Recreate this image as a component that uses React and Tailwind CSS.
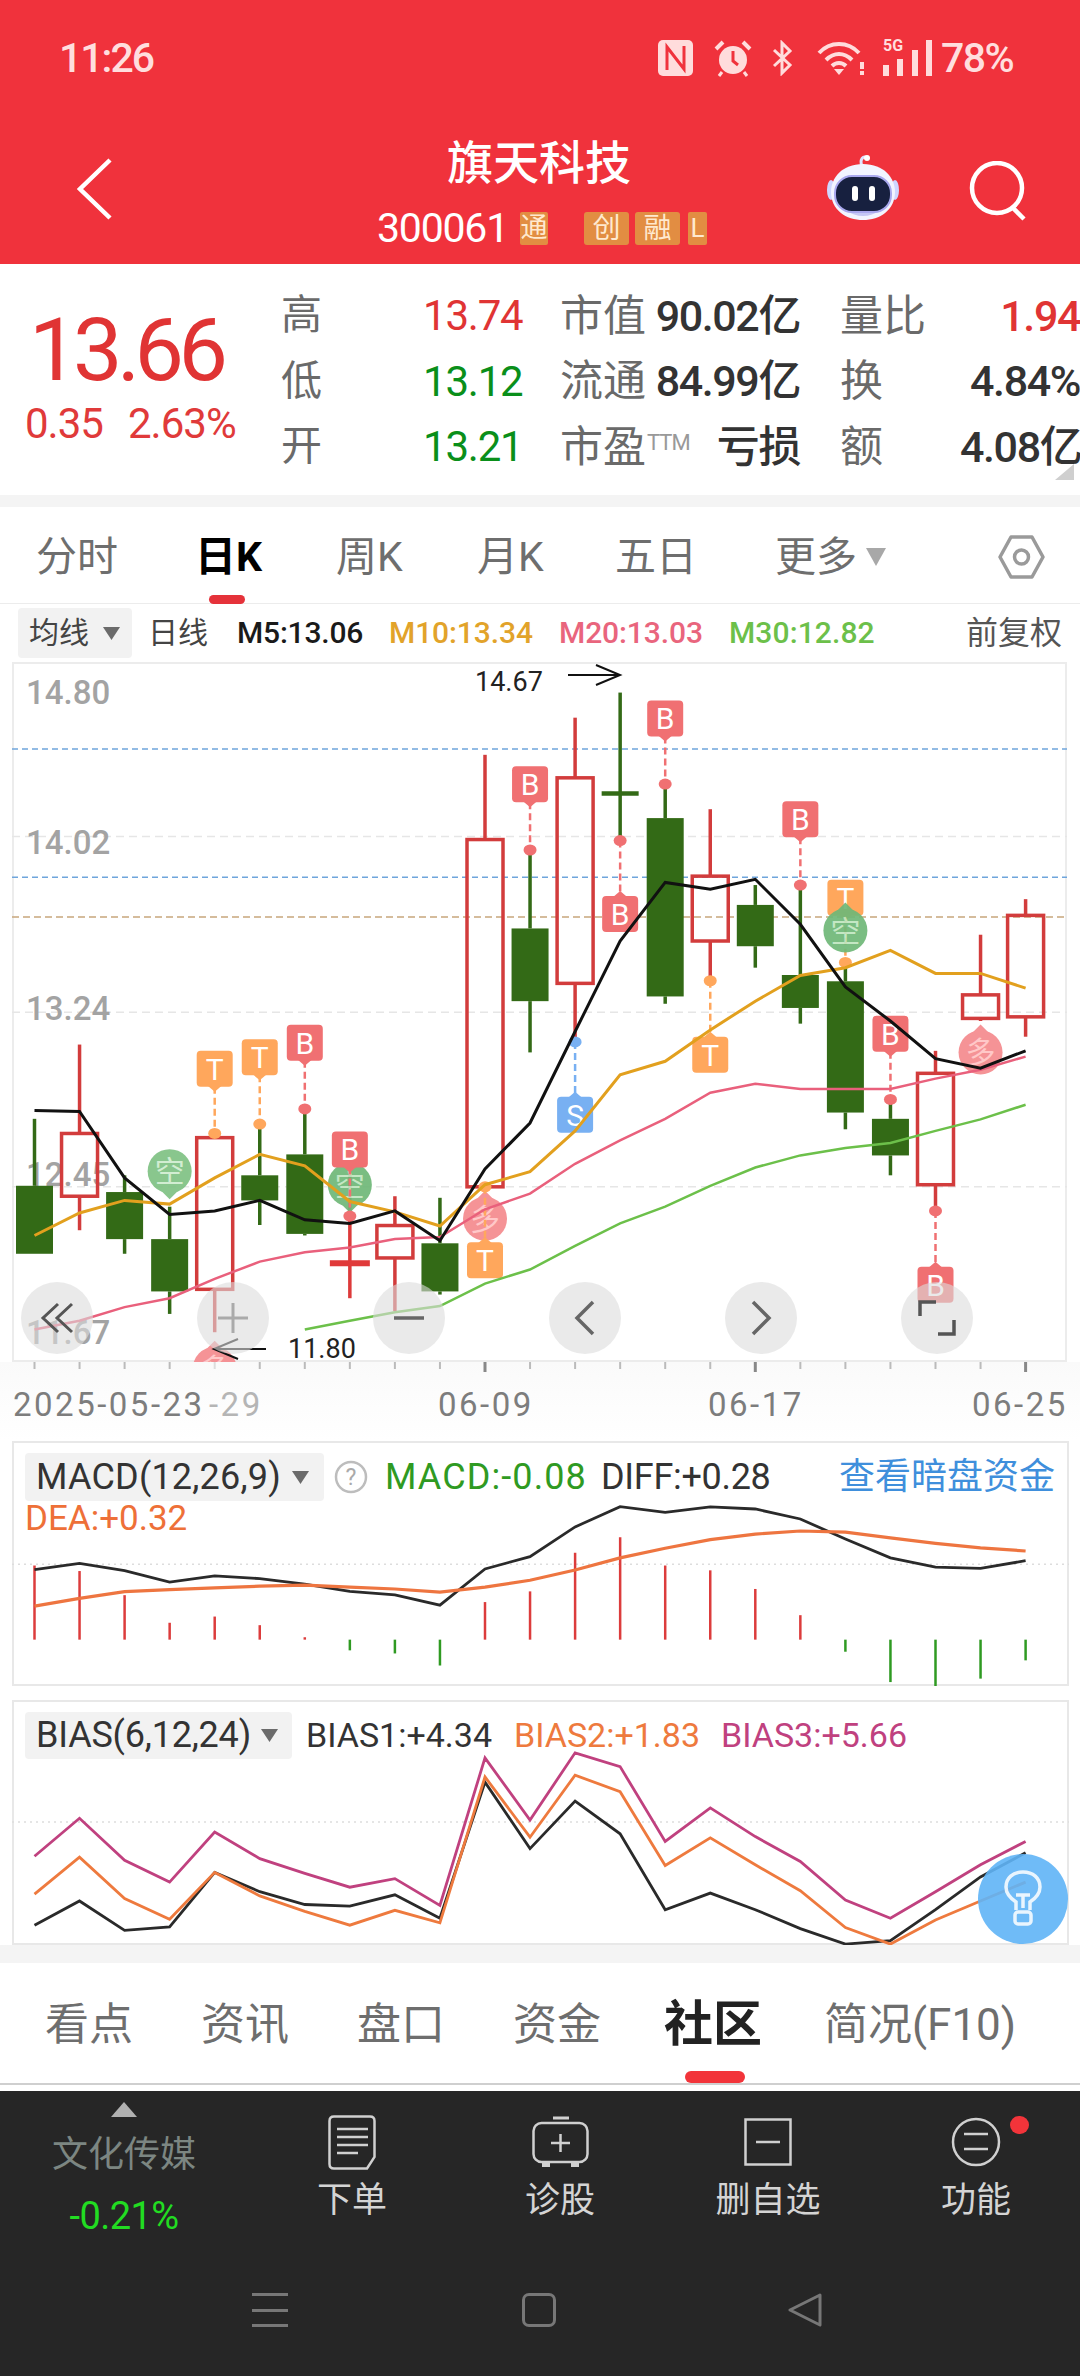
import React from "react";

const zy = (z) => 600 + z / 1.912;
const X = (i) => 34.5 + 45.05 * i;
const RED = "#d23c3c";
const GREEN = "#336a16";

const candles = [
  [0, 992, 1120, 1250, 1250, "g"],
  [1, 850, 1020, 1140, 1205, "r"],
  [2, 1100, 1132, 1222, 1250, "g"],
  [3, 1160, 1222, 1322, 1365, "g"],
  [4, 1028, 1028, 1318, 1400, "r"],
  [5, 1000, 1100, 1148, 1195, "g"],
  [6, 975, 1060, 1212, 1215, "g"],
  [8, 1140, 1196, 1258, 1360, "r"],
  [9, 1143, 1230, 1322, 1328, "g"],
  [10, 296, 458, 1122, 1122, "r"],
  [11, 478, 628, 767, 865, "g"],
  [12, 225, 340, 733, 845, "r"],
  [14, 352, 417, 758, 772, "g"],
  [15, 400, 528, 652, 728, "r"],
  [16, 545, 583, 662, 703, "g"],
  [17, 545, 717, 780, 810, "g"],
  [18, 695, 729, 980, 1012, "g"],
  [19, 955, 992, 1062, 1100, "g"],
  [20, 862, 905, 1118, 1168, "r"],
  [21, 640, 755, 800, 805, "r"],
  [22, 572, 603, 797, 835, "r"],
];

const m5 = [976, 978, 1105, 1175, 1168, 1148, 1185, 1192, 1168, 1225, 1088, 1000, 825, 652, 540, 553, 534, 620, 740, 805, 877, 895, 862];
const m10 = [1215, 1172, 1148, 1155, 1105, 1060, 1082, 1150, 1170, 1197, 1118, 1093, 1015, 908, 882, 822, 767, 718, 703, 670, 714, 714, 742];
const m20 = [1395, 1378, 1352, 1335, 1298, 1265, 1247, 1238, 1222, 1218, 1165, 1135, 1078, 1033, 992, 942, 925, 935, 935, 935, 915, 898, 873];
const m30 = [null, null, null, null, null, null, 1395, 1378, 1362, 1350, 1307, 1280, 1235, 1192, 1160, 1120, 1085, 1062, 1048, 1038, 1015, 993, 965];

const line = (arr, yf) =>
  arr
    .map((v, i) => (v == null ? null : `${X(i).toFixed(1)},${yf(v).toFixed(1)}`))
    .filter(Boolean)
    .join(" ");

const TAG = { B: "#f07072", T: "#ffa75c", S: "#78b0f2" };

function Tag({ i, top, dot, label, up }) {
  const x = X(i);
  const t = zy(top);
  const c = TAG[label];
  const d = zy(dot);
  const bot = t + 36;
  return (
    <g>
      <line x1={x} x2={x} y1={up ? d : bot} y2={up ? t : d} stroke={c} strokeWidth="2.5" strokeDasharray="7 4" />
      <ellipse cx={x} cy={d} rx="6.5" ry="5.5" fill={c} />
      <rect x={x - 18} y={t} width="36" height="36" rx="4" fill={c} />
      {up ? (
        <polygon points={`${x - 7},${t + 1} ${x + 7},${t + 1} ${x},${t - 5}`} fill={c} />
      ) : (
        <polygon points={`${x - 7},${bot - 1} ${x + 7},${bot - 1} ${x},${bot + 5}`} fill={c} />
      )}
      <text x={x} y={t + 29} textAnchor="middle" fontSize="30" fill="#fff">
        {label}
      </text>
    </g>
  );
}

function Bubble({ i, cz, label, color, up, textColor }) {
  const x = X(i);
  const y = zy(cz);
  return (
    <g opacity="0.92">
      <circle cx={x} cy={y} r="22" fill={color} />
      {up ? (
        <polygon points={`${x - 10},${y - 18} ${x + 10},${y - 18} ${x},${y - 28}`} fill={color} />
      ) : (
        <polygon points={`${x - 10},${y + 18} ${x + 10},${y + 18} ${x},${y + 28}`} fill={color} />
      )}
      <text x={x} y={y + 11} textAnchor="middle" fontSize="30" fill={textColor}>
        {label}
      </text>
    </g>
  );
}

function MainChart() {
  return (
    <svg className="absolute inset-0 block" width="1055" height="700" viewBox="12 662 1055 700">
      {[452, 788, 1122].map((z) => (
        <line key={z} x1="12" x2="1067" y1={zy(z)} y2={zy(z)} stroke="#e6e6e6" strokeWidth="1.5" strokeDasharray="8 5" />
      ))}
      {[285, 530].map((z) => (
        <line key={z} x1="12" x2="1067" y1={zy(z)} y2={zy(z)} stroke="#6fa5dc" strokeWidth="1.5" strokeDasharray="6 4" />
      ))}
      <line x1="12" x2="1067" y1={zy(606)} y2={zy(606)} stroke="#c8a67c" strokeWidth="1.5" strokeDasharray="7 4" />
      {[
        ["14.80", 175],
        ["14.02", 462],
        ["13.24", 780],
        ["12.45", 1098],
        ["11.67", 1400],
      ].map(([t, z]) => (
        <text key={t} x="26" y={zy(z) + 12} fontSize="33" fill="#a3a3a3" fontWeight="500">
          {t}
        </text>
      ))}
      {candles.map(([i, h, t, b, l, k]) => {
        const x = X(i);
        const c = k === "r" ? RED : GREEN;
        return (
          <g key={i}>
            <line x1={x} x2={x} y1={zy(h)} y2={zy(t)} stroke={c} strokeWidth="3.5" />
            <line x1={x} x2={x} y1={zy(b)} y2={zy(l)} stroke={c} strokeWidth="3.5" />
            {k === "r" ? (
              <rect x={x - 18} y={zy(t)} width="36" height={zy(b) - zy(t)} fill="none" stroke={c} strokeWidth="3.5" />
            ) : (
              <rect x={x - 18.5} y={zy(t)} width="37" height={zy(b) - zy(t)} fill={c} />
            )}
          </g>
        );
      })}
      <line x1={X(7)} x2={X(7)} y1={zy(1100)} y2={zy(1335)} stroke="#dd3a3a" strokeWidth="3.5" />
      <line x1={X(7) - 20} x2={X(7) + 20} y1={zy(1268)} y2={zy(1268)} stroke="#e03a3a" strokeWidth="6" />
      <line x1={X(13)} x2={X(13)} y1={zy(177)} y2={zy(460)} stroke={GREEN} strokeWidth="3.5" />
      <line x1={X(13) - 18.5} x2={X(13) + 18.5} y1={zy(370)} y2={zy(370)} stroke={GREEN} strokeWidth="4.5" />

      <Bubble i={3} cz={1092} label="空" color="#7fc284" textColor="#cfeccf" />
      <Tag i={4} top={862} dot={1020} label="T" />
      <Tag i={5} top={840} dot={1002} label="T" />
      <Tag i={6} top={812} dot={973} label="B" />
      <Bubble i={7} cz={1118} label="空" color="#6fb878" textColor="#bfe5bf" />
      <Tag i={7} top={1016} dot={1178} label="B" />
      <Bubble i={10} cz={1183} label="多" color="#f58a8e" textColor="#ffc4c4" up />
      <Tag i={10} top={1228} dot={1122} label="T" up />
      <Tag i={11} top={318} dot={478} label="B" />
      <Tag i={12} top={950} dot={845} label="S" up />
      <Tag i={13} top={566} dot={460} label="B" up />
      <Tag i={14} top={192} dot={352} label="B" />
      <Tag i={15} top={835} dot={728} label="T" up />
      <Tag i={17} top={385} dot={545} label="B" />
      <Tag i={18} top={535} dot={693} label="T" />
      <Bubble i={18} cz={632} label="空" color="#6fb878" textColor="#bfe5bf" up />
      <Tag i={19} top={795} dot={955} label="B" />
      <Tag i={20} top={1275} dot={1168} label="B" up />
      <Bubble i={21} cz={865} label="多" color="#f58a8e" textColor="#ffc4c4" up />
      <Bubble i={4} cz={1470} label="多" color="#f58a8e" textColor="#ffc4c4" up />

      <polyline points={line(m30, zy)} fill="none" stroke="#6cc04a" strokeWidth="2.5" />
      <polyline points={line(m20, zy)} fill="none" stroke="#e9607c" strokeWidth="2.5" />
      <polyline points={line(m10, zy)} fill="none" stroke="#e2a01e" strokeWidth="3" />
      <polyline points={line(m5, zy)} fill="none" stroke="#111" strokeWidth="3" />

      <text x="475" y="691" fontSize="27" fill="#222">14.67</text>
      <path d="M568 675H620M596 665L620 675L596 685" fill="none" stroke="#111" strokeWidth="2" />
      <text x="288" y="1358" fontSize="27" fill="#222">11.80</text>
      <path d="M266 1349H214M238 1339L214 1349L238 1359" fill="none" stroke="#111" strokeWidth="2" />
    </svg>
  );
}

const Caret = ({ cls = "" }) => (
  <svg className={cls} width="17" height="13" viewBox="0 0 17 13">
    <polygon points="0,0 17,0 8.5,13" fill="#6b6b6b" />
  </svg>
);

const RoundBtn = ({ children }) => (
  <div className="w-[72px] h-[72px] rounded-full bg-[#dcdcdc]/60 flex items-center justify-center">{children}</div>
);

const macdBars = [422, 438, 508, 588, 570, 595, 630, 668, 677, 712, 528, 497, 385, 340, 422, 436, 490, 566, 672, 760, 772, 750, 697];
const diff = [434, 416, 437, 470, 452, 460, 476, 497, 507, 537, 432, 396, 310, 251, 268, 252, 258, 287, 345, 400, 427, 430, 408];
const dea = [540, 517, 498, 492, 487, 482, 479, 485, 490, 499, 485, 465, 435, 400, 372, 347, 331, 322, 325, 342, 358, 371, 380];
const b3 = [1265, 1155, 1277, 1340, 1195, 1272, 1315, 1355, 1330, 1408, 980, 1160, 965, 1005, 1222, 1125, 1208, 1280, 1392, 1445, 1368, 1290, 1222];
const b2 = [1375, 1268, 1388, 1448, 1312, 1380, 1425, 1465, 1422, 1458, 1035, 1210, 1030, 1078, 1292, 1212, 1290, 1365, 1472, 1520, 1450, 1395, 1340];
const b1 = [1465, 1395, 1480, 1470, 1312, 1368, 1405, 1410, 1377, 1445, 1050, 1243, 1105, 1200, 1420, 1372, 1420, 1475, 1520, 1510, 1420, 1325, 1255];
const z4 = (z) => 1420 + z / 2.9;

function StatusIcons() {
  return (
    <div className="flex items-center text-[#ffdede]">
      <svg width="35" height="36" viewBox="0 0 35 36" className="mr-[21px]">
        <rect width="35" height="36" rx="5" fill="#ffdcdc" />
        <path d="M9 30V7L26 29V6" fill="none" stroke="#f0323c" strokeWidth="3" />
      </svg>
      <svg width="38" height="38" viewBox="0 0 38 38" className="mr-[20px]">
        <circle cx="19" cy="21" r="14" fill="#ffdcdc" />
        <path d="M19 12V22L24 26" fill="none" stroke="#f0323c" strokeWidth="3" />
        <path d="M2 10L9 3M36 10L29 3" stroke="#ffdcdc" strokeWidth="4" />
        <path d="M8 33L5 37M30 33L33 37" stroke="#ffdcdc" strokeWidth="3" />
      </svg>
      <svg width="21" height="36" viewBox="0 0 21 36" className="mr-[24px]">
        <path d="M2 10L18 25L10 33V3L18 11L2 26" fill="none" stroke="#ffdcdc" strokeWidth="3" />
      </svg>
      <svg width="48" height="36" viewBox="0 0 48 36" className="mr-[18px]">
        <path d="M2 13C13 1 31 1 42 13M9 20C17 12 27 12 35 20M15 26C19 22 25 22 29 26" fill="none" stroke="#ffdcdc" strokeWidth="4" />
        <polygon points="17,29 27,29 22,35" fill="#ffdcdc" />
        <rect x="43" y="22" width="4" height="7" fill="#ffdcdc" />
        <rect x="43" y="31" width="4" height="4" fill="#ffdcdc" />
      </svg>
      <div className="relative w-[49px] h-[36px] mr-[9px]">
        <span className="absolute left-0 top-[-2px] text-[16px] leading-[16px] font-bold">5G</span>
        <div className="absolute inset-0 flex items-end justify-between">
          <span className="w-[6px] h-[11px] bg-[#ffdcdc]" />
          <span className="w-[6px] h-[17px] bg-[#ffdcdc]" />
          <span className="w-[6px] h-[26px] bg-[#ffdcdc]" />
          <span className="w-[6px] h-[36px] bg-[#ffdcdc]" />
        </div>
      </div>
      <span className="w-[74px] text-[41px] leading-[44px] font-medium tracking-[-1.5px] whitespace-nowrap">78%</span>
    </div>
  );
}

const Robot = () => (
  <svg width="74" height="68" viewBox="0 0 74 68">
    <path d="M36 12C33 5 38 1 41 4" fill="none" stroke="#dfe3ff" strokeWidth="3" />
    <circle cx="41" cy="4" r="3" fill="#fff" />
    <ellipse cx="5" cy="36" rx="4" ry="10" fill="#cfd6ff" />
    <ellipse cx="69" cy="36" rx="4" ry="10" fill="#cfd6ff" />
    <path d="M37 10C58 10 69 24 69 38C69 56 54 66 37 66C20 66 5 56 5 38C5 24 16 10 37 10Z" fill="#f2f4ff" />
    <path d="M20 50C30 60 44 60 54 50L54 56C44 64 30 64 20 56Z" fill="#c5c7f5" />
    <rect x="9" y="22" width="56" height="36" rx="17" fill="#17203f" stroke="#a9a8ee" strokeWidth="2" />
    <rect x="26" y="32" width="6" height="15" rx="3" fill="#fff" />
    <rect x="43" y="32" width="6" height="15" rx="3" fill="#fff" />
  </svg>
);

function Tab({ w, ml, active, children }) {
  return (
    <div className={`relative ${w} ${ml} ${active ? "text-black font-bold" : "text-[#6e6e6e]"} text-[41px] leading-[50px] whitespace-nowrap`}>
      {children}
    </div>
  );
}

function InfoRow({ a, b, bc, c, d, dc, e, f, fc }) {
  return (
    <div className="flex h-[65.5px] items-center whitespace-nowrap translate-y-[2px]">
      <span className="w-[142px] text-[41px] text-[#6a6a6a]">{a}</span>
      <span className={`w-[139px] text-[42px] tracking-[-1.2px] ${bc}`}>{b}</span>
      <span className="w-[94px] ml-[-2px] text-[43px] text-[#6a6a6a]">{c}</span>
      <span className={`w-[146px] text-right text-[43px] text-[#333] font-medium ${dc} tracking-[-1.4px]`}>{d}</span>
      <span className="w-[120px] ml-[40px] text-[43px] text-[#6a6a6a]">{e}</span>
      <span className={`w-[120px] text-right text-[43px] font-medium tracking-[-1.4px] ${fc}`}>{f}</span>
    </div>
  );
}

const NavItem = ({ w, icon, label }) => (
  <div className={`${w} flex flex-col items-center pt-[23px]`}>
    <div className="h-[56px] flex items-center justify-center">{icon}</div>
    <div className="mt-[12px] text-[35px] leading-[38px] text-[#d4d4d4]">{label}</div>
  </div>
);

export default function App() {
  return (
    <div className="relative w-[1080px] h-[2376px] overflow-hidden bg-white flex flex-col font-[Roboto,'Noto_Sans_CJK_SC',sans-serif]">
      {/* red header */}
      <header className="h-[264px] bg-[#f0323c] flex flex-col shrink-0">
        <div className="h-[116px] flex items-center pl-[59px] pr-[65px] justify-between">
          <span className="text-[41px] leading-[44px] font-medium text-[#ffdede] tracking-[-2px]">11:26</span>
          <StatusIcons />
        </div>
        <div className="flex-1 flex">
          <div className="w-[377px] pl-[77px] pt-[42px]">
            <svg width="35" height="62" viewBox="0 0 35 62">
              <path d="M33 2L3 31L33 60" fill="none" stroke="#fff" strokeWidth="4.5" />
            </svg>
          </div>
          <div className="w-[330px] flex flex-col pt-[20px]">
            <div className="text-[46px] leading-[54px] text-white font-medium ml-[70px] whitespace-nowrap">旗天科技</div>
            <div className="flex items-center h-[34px] mt-[21px] whitespace-nowrap">
              <span className="text-[41px] leading-[40px] text-white w-[143px] tracking-[-1.2px]">300061</span>
              <span className="w-[28px] h-[33px] bg-[#e28d42] text-[#ffe9cf] text-[27px] leading-[33px] overflow-hidden flex justify-center rounded-[2px]">通</span>
              <span className="w-[45px] h-[33px] ml-[36px] bg-[#e28d42] text-[#ffe9cf] text-[28px] leading-[33px] text-center rounded-[3px]">创</span>
              <span className="w-[45px] h-[33px] ml-[6px] bg-[#e28d42] text-[#ffe9cf] text-[28px] leading-[33px] text-center rounded-[3px]">融</span>
              <span className="w-[19px] h-[33px] ml-[8px] bg-[#e28d42] text-[#ffe9cf] text-[26px] leading-[33px] text-center rounded-[2px]">L</span>
            </div>
          </div>
          <div className="ml-[119px] pt-[38px]">
            <Robot />
          </div>
          <div className="ml-[68px] pt-[45px]">
            <svg width="60" height="60" viewBox="0 0 60 60">
              <circle cx="29" cy="27" r="25" fill="none" stroke="#fff" strokeWidth="4.5" />
              <path d="M44 46L56 58" stroke="#fff" strokeWidth="4.5" />
            </svg>
          </div>
        </div>
      </header>

      {/* quote */}
      <section className="relative h-[231px] flex shrink-0">
        <div className="w-[281px] pt-[42px] shrink-0">
          <div className="pl-[29px] text-[88px] leading-[88px] text-[#e03434] tracking-[-5.5px] whitespace-nowrap">13.66</div>
          <div className="pl-[25px] mt-[10px] text-[42px] leading-[40px] text-[#e03a3a] tracking-[-1px] flex whitespace-nowrap">
            <span className="w-[103px]">0.35</span>
            <span>2.63%</span>
          </div>
        </div>
        <div className="pt-[17px] w-[799px]">
          <InfoRow a="高" b="13.74" bc="text-[#e03434]" c="市值" d="90.02亿" e="量比" f="1.94" fc="text-[#e03434]" />
          <InfoRow a="低" b="13.12" bc="text-[#0a8f1a]" c="流通" d="84.99亿" e="换" f="4.84%" fc="text-[#333]" />
          <InfoRow
            a="开"
            b="13.21"
            bc="text-[#0a8f1a]"
            c={
              <>
                市盈<span className="text-[22px] text-[#999] align-[12px] ml-[1px] tracking-[-1px]">TTM</span>
              </>
            }
            d="亏损"
            dc="font-bold"
            e="额"
            f="4.08亿"
            fc="text-[#333]"
          />
        </div>
        <svg className="absolute right-[6px] bottom-[15px]" width="19" height="16" viewBox="0 0 19 16">
          <polygon points="19,0 19,16 0,16" fill="#cfcfcf" />
        </svg>
      </section>

      <div className="h-[12px] bg-[#f4f4f4] shrink-0" />

      {/* period tabs */}
      <nav className="h-[97px] flex items-center border-b border-[#ececec] shrink-0 pt-[3px]">
        <Tab w="w-[82px]" ml="ml-[36px]">分时</Tab>
        <Tab w="w-[64px]" ml="ml-[77px]" active>
          日K
          <span className="absolute left-[14px] top-[63px] w-[36px] h-[9px] rounded-full bg-[#e5323a]" />
        </Tab>
        <Tab w="w-[65px]" ml="ml-[77px]">周K</Tab>
        <Tab w="w-[64px]" ml="ml-[76px]">月K</Tab>
        <Tab w="w-[80px]" ml="ml-[74px]">五日</Tab>
        <Tab w="w-[80px]" ml="ml-[80px]">更多</Tab>
        <svg className="ml-[11px]" width="20" height="18" viewBox="0 0 20 18">
          <polygon points="0,0 20,0 10,18" fill="#a8a8a8" />
        </svg>
        <svg className="ml-auto mr-[35px]" width="47" height="44" viewBox="0 0 47 44">
          <polygon points="13,2 34,2 45,22 34,42 13,42 2,22" fill="none" stroke="#9a9a9a" strokeWidth="3.5" strokeLinejoin="round" />
          <circle cx="23.5" cy="22" r="7" fill="none" stroke="#9a9a9a" strokeWidth="3.5" />
        </svg>
      </nav>

      {/* MA legend */}
      <div className="h-[58px] flex items-center whitespace-nowrap text-[30px] leading-[36px] shrink-0">
        <div className="ml-[18px] w-[114px] h-[50px] bg-[#f2f2f2] rounded-[4px] flex items-center pl-[11px] text-[#444]">
          <span className="w-[74px]">均线</span>
          <Caret />
        </div>
        <span className="ml-[16px] w-[89px] text-[#444]">日线</span>
        <span className="w-[152px] font-medium tracking-[-0.2px] text-[#1a1a1a]">M5:13.06</span>
        <span className="w-[170px] font-medium tracking-[-0.1px] text-[#e2a32a]">M10:13.34</span>
        <span className="w-[170px] font-medium tracking-[-0.1px] text-[#e9657d]">M20:13.03</span>
        <span className="font-medium tracking-[0.1px] text-[#6cc04a]">M30:12.82</span>
        <span className="ml-auto mr-[18px] text-[32px] text-[#555]">前复权</span>
      </div>

      {/* main chart */}
      <div className="relative ml-[12px] w-[1055px] h-[700px] shrink-0 overflow-hidden outline-2 outline-[#ececec] -outline-offset-2">
        <MainChart />
        <div className="absolute left-[9px] top-[620px] w-[952px] flex justify-between">
          <RoundBtn>
            <svg width="34" height="32" viewBox="0 0 34 32"><path d="M18 2L3 16L18 30M32 2L17 16L32 30" fill="none" stroke="#555" strokeWidth="3" /></svg>
          </RoundBtn>
          <RoundBtn>
            <svg width="30" height="30" viewBox="0 0 30 30"><path d="M0 15H30M15 0V30" stroke="#aaa" strokeWidth="3" /></svg>
          </RoundBtn>
          <RoundBtn>
            <svg width="30" height="4" viewBox="0 0 30 4"><path d="M0 2H30" stroke="#666" strokeWidth="3.5" /></svg>
          </RoundBtn>
          <RoundBtn>
            <svg width="24" height="36" viewBox="0 0 24 36"><path d="M20 2L4 18L20 34" fill="none" stroke="#666" strokeWidth="3.5" /></svg>
          </RoundBtn>
          <RoundBtn>
            <svg width="24" height="36" viewBox="0 0 24 36"><path d="M4 2L20 18L4 34" fill="none" stroke="#666" strokeWidth="3.5" /></svg>
          </RoundBtn>
          <RoundBtn>
            <svg width="38" height="36" viewBox="0 0 38 36"><path d="M2 16V2H18M20 34H36V20" fill="none" stroke="#555" strokeWidth="3.5" /></svg>
          </RoundBtn>
        </div>
      </div>

      {/* date axis */}
      <div className="relative h-[79px] shrink-0 bg-gradient-to-b from-[#fafafa] to-white text-[33px] leading-[40px] tracking-[2.5px] text-[#7d7d7d]">
        <svg className="block" width="1080" height="10" viewBox="0 1362 1080 10">
          {Array.from({ length: 23 }).map((_, i) => {
            const big = i === 10 || i === 16 || i === 22;
            return <line key={i} x1={X(i)} x2={X(i)} y1="1362" y2={big ? 1372 : 1369} stroke={i === 4 ? "#dddddd" : big ? "#888" : "#bbb"} strokeWidth={big ? 3 : 2} />;
          })}
        </svg>
        <div className="flex mt-[13px] whitespace-nowrap">
          <span className="ml-[13px] w-[196px]">2025-05-23</span>
          <span className="text-[#b5b5b5] w-[229px]">-29</span>
          <span className="w-[270px]">06-09</span>
          <span className="w-[264px]">06-17</span>
          <span>06-25</span>
        </div>
      </div>

      {/* MACD */}
      <div className="relative ml-[12px] w-[1057px] h-[245px] shrink-0 outline-2 outline-[#e8e8e8] -outline-offset-2">
        <svg className="absolute inset-0 block" width="1057" height="245" viewBox="12 1441 1057 245">
          <line x1="12" x2="1069" y1={z4(418)} y2={z4(418)} stroke="#ddd" strokeWidth="1.5" strokeDasharray="2 4" />
          {macdBars.map((z, i) => {
            const red = z < 637;
            return <line key={i} x1={X(i)} x2={X(i)} y1={z4(z)} y2={z4(637)} stroke={red ? "#dc3c3c" : "#2f9a22"} strokeWidth="2.5" />;
          })}
          <polyline points={line(diff, z4)} fill="none" stroke="#2a2a2a" strokeWidth="2.8" />
          <polyline points={line(dea, z4)} fill="none" stroke="#ee7540" strokeWidth="3.2" />
        </svg>
        <div className="relative flex items-center h-[48px] mt-[12px] whitespace-nowrap text-[36px] leading-[48px]">
          <div className="ml-[13px] w-[299px] h-[48px] bg-[#f2f2f2] rounded-[4px] flex items-center pl-[11px] text-[#333] tracking-[0.2px]">
            <span className="w-[256px]">MACD(12,26,9)</span>
            <Caret />
          </div>
          <svg className="ml-[10px]" width="34" height="34" viewBox="0 0 34 34">
            <circle cx="17" cy="17" r="15" fill="none" stroke="#bdbdbd" strokeWidth="2.5" />
            <text x="17" y="25" textAnchor="middle" fontSize="23" fill="#aaaaaa">?</text>
          </svg>
          <span className="ml-[17px] w-[216px] text-[#2f9a22] tracking-[1.1px]">MACD:-0.08</span>
          <span className="text-[#333] tracking-[-0.3px]">DIFF:+0.28</span>
          <span className="ml-auto mr-[14px] text-[#3f8fdc]">查看暗盘资金</span>
        </div>
        <div className="relative ml-[13px] text-[35px] leading-[42px] text-[#ee7038] whitespace-nowrap -mt-[3px]">DEA:+0.32</div>
      </div>

      {/* BIAS */}
      <div className="relative ml-[12px] mt-[14px] w-[1057px] h-[245px] shrink-0 outline-2 outline-[#e8e8e8] -outline-offset-2">
        <svg className="absolute inset-0 block" width="1057" height="245" viewBox="12 1700 1057 245">
          <line x1="12" x2="1069" y1={z4(1166)} y2={z4(1166)} stroke="#ddd" strokeWidth="1.5" strokeDasharray="2 4" />
          <polyline points={line(b1, z4)} fill="none" stroke="#2a2a2a" strokeWidth="2.8" />
          <polyline points={line(b2, z4)} fill="none" stroke="#ee7a3e" strokeWidth="2.8" />
          <polyline points={line(b3, z4)} fill="none" stroke="#c0417f" strokeWidth="2.8" />
        </svg>
        <div className="relative flex items-center h-[47px] mt-[12px] whitespace-nowrap text-[34px] leading-[47px]">
          <div className="ml-[13px] w-[267px] h-[47px] bg-[#f2f2f2] rounded-[4px] flex items-center pl-[11px] text-[#333]">
            <span className="w-[225px] text-[36px] tracking-[-0.2px]">BIAS(6,12,24)</span>
            <Caret />
          </div>
          <span className="ml-[14px] w-[208px] text-[#333]">BIAS1:+4.34</span>
          <span className="w-[207px] text-[#ee7a3e]">BIAS2:+1.83</span>
          <span className="text-[#c0417f]">BIAS3:+5.66</span>
        </div>
        <div className="absolute left-[966px] top-[154px] w-[90px] h-[90px] rounded-full bg-[#5fb4f6]/90 flex items-center justify-center">
          <svg width="40" height="58" viewBox="0 0 40 58">
            <path d="M13 40V32C7 28 3 23 3 17C3 8 10 2 20 2C30 2 37 8 37 17C37 23 33 28 27 32V40" fill="none" stroke="#ffffff" strokeOpacity="0.85" strokeWidth="3.5" />
            <path d="M13 25H27M20 25V38" stroke="#fff" strokeOpacity="0.85" strokeWidth="3.5" />
            <rect x="12" y="42" width="16" height="12" rx="3" fill="none" stroke="#fff" strokeOpacity="0.85" strokeWidth="3.5" />
          </svg>
        </div>
      </div>

      <div className="h-[18px] bg-[#f4f4f4] shrink-0" />

      {/* info tabs */}
      <nav className="relative h-[122px] flex items-center shrink-0 border-b-2 border-[#cfcfcf] whitespace-nowrap text-[44px] leading-[52px] text-[#6e6e6e] pt-[3px]">
        <span className="ml-[45px] w-[88px]">看点</span>
        <span className="ml-[68px] w-[88px]">资讯</span>
        <span className="ml-[68px] w-[88px]">盘口</span>
        <span className="ml-[68px] w-[88px]">资金</span>
        <span className="ml-[63px] w-[98px] text-[49px] font-bold text-[#222]">社区</span>
        <span className="ml-[62px]">简况(F10)</span>
        <span className="absolute left-[685px] bottom-0 w-[60px] h-[12px] rounded-full bg-[#f2343a]" />
      </nav>
      <div className="h-[6px] bg-white shrink-0" />

      {/* dark bottom */}
      <footer className="flex-1 bg-[#262626] flex flex-col">
        <div className="h-[202px] flex">
          <div className="w-[248px] flex flex-col items-center pt-[11px]">
            <svg width="26" height="15" viewBox="0 0 26 15">
              <polygon points="13,0 26,15 0,15" fill="#b0b0b0" />
            </svg>
            <div className="mt-[17px] text-[36px] leading-[42px] text-[#7c8682] whitespace-nowrap">文化传媒</div>
            <div className="mt-[20px] text-[38px] leading-[40px] text-[#22dc22] tracking-[-0.6px]">-0.21%</div>
          </div>
          <NavItem
            w="w-[208px]"
            label="下单"
            icon={
              <svg width="48" height="55" viewBox="0 0 48 55">
                <path d="M6 1.5H42C45 1.5 46.5 3 46.5 6V42L39 53.5H6C3 53.5 1.5 52 1.5 49V6C1.5 3 3 1.5 6 1.5Z" fill="none" stroke="#d0d0d0" strokeWidth="2.5" />
                <path d="M9 14H40M9 22H40M9 30H40M9 38H30" stroke="#d0d0d0" strokeWidth="2.5" />
              </svg>
            }
          />
          <NavItem
            w="w-[208px]"
            label="诊股"
            icon={
              <svg width="57" height="52" viewBox="0 0 57 52">
                <path d="M21 2H37" stroke="#d0d0d0" strokeWidth="3" />
                <rect x="1.5" y="7" width="54" height="39" rx="8" fill="none" stroke="#d0d0d0" strokeWidth="2.5" />
                <path d="M28.5 18V36M19 27H38" stroke="#d0d0d0" strokeWidth="2.5" />
                <path d="M10 46H18V51H10ZM39 46H47V51H39Z" fill="#d0d0d0" />
              </svg>
            }
          />
          <NavItem
            w="w-[208px]"
            label="删自选"
            icon={
              <svg width="48" height="48" viewBox="0 0 48 48">
                <rect x="1.5" y="1.5" width="45" height="45" fill="none" stroke="#d0d0d0" strokeWidth="2.5" />
                <path d="M12 24H36" stroke="#d0d0d0" strokeWidth="2.5" />
              </svg>
            }
          />
          <div className="relative">
            <NavItem
              w="w-[208px]"
              label="功能"
              icon={
                <svg width="50" height="50" viewBox="0 0 50 50">
                  <circle cx="25" cy="25" r="23" fill="none" stroke="#d0d0d0" strokeWidth="2.5" />
                  <path d="M13 17H37M13 32H37" stroke="#d0d0d0" strokeWidth="2.5" />
                </svg>
              }
            />
            <span className="absolute left-[138px] top-[25px] w-[19px] h-[18px] rounded-full bg-[#f2343a]" />
          </div>
        </div>
        <div className="flex items-start h-[34px]">
          <div className="ml-[252px] w-[36px] h-[34px] flex flex-col justify-between">
            <span className="h-[3px] bg-[#777]" />
            <span className="h-[3px] bg-[#777]" />
            <span className="h-[3px] bg-[#777]" />
          </div>
          <div className="ml-[234px] w-[34px] h-[34px] rounded-[7px] border-[3px] border-[#777]" />
          <svg className="ml-[232px]" width="34" height="34" viewBox="0 0 34 34">
            <path d="M32 2L2 17L32 32Z" fill="none" stroke="#777" strokeWidth="3" strokeLinejoin="round" />
          </svg>
        </div>
      </footer>
    </div>
  );
}
